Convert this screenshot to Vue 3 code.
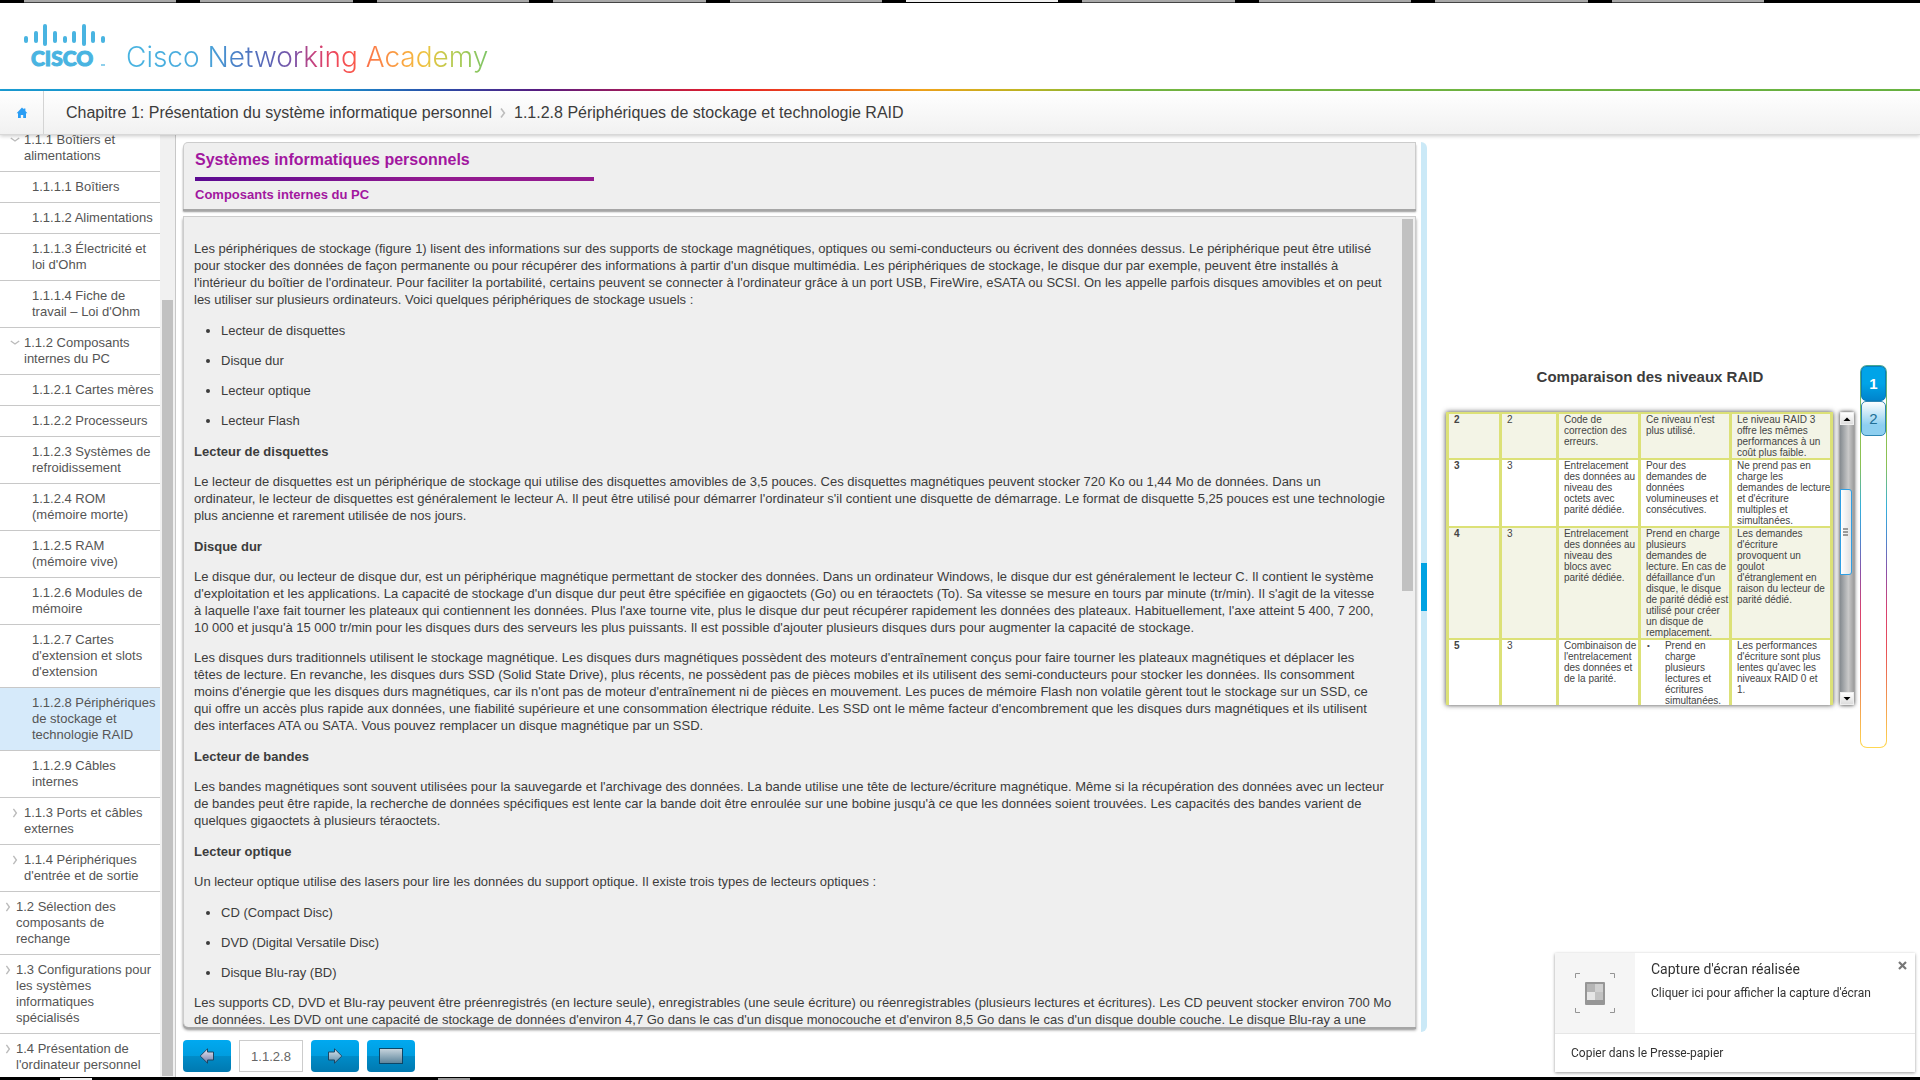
<script setup>
const tabs = [0, 1, 2, 3, 4, 5, 6, 7, 8, 9]
const activeTab = 5

const menu = [
  { level: 2, mark: 'down', text: '1.1.1 Boîtiers et alimentations' },
  { level: 3, text: '1.1.1.1 Boîtiers' },
  { level: 3, text: '1.1.1.2 Alimentations' },
  { level: 3, text: "1.1.1.3 Électricité et loi d'Ohm" },
  { level: 3, text: "1.1.1.4 Fiche de travail – Loi d'Ohm" },
  { level: 2, mark: 'down', text: '1.1.2 Composants internes du PC' },
  { level: 3, text: '1.1.2.1 Cartes mères' },
  { level: 3, text: '1.1.2.2 Processeurs' },
  { level: 3, text: '1.1.2.3 Systèmes de refroidissement' },
  { level: 3, text: '1.1.2.4 ROM (mémoire morte)' },
  { level: 3, text: '1.1.2.5 RAM (mémoire vive)' },
  { level: 3, text: '1.1.2.6 Modules de mémoire' },
  { level: 3, text: "1.1.2.7 Cartes d'extension et slots d'extension" },
  { level: 3, active: true, text: '1.1.2.8 Périphériques de stockage et technologie RAID' },
  { level: 3, text: '1.1.2.9 Câbles internes' },
  { level: 2, mark: 'right', text: '1.1.3 Ports et câbles externes' },
  { level: 2, mark: 'right', text: "1.1.4 Périphériques d'entrée et de sortie" },
  { level: 1, mark: 'right', text: '1.2 Sélection des composants de rechange' },
  { level: 1, mark: 'right', text: '1.3 Configurations pour les systèmes informatiques spécialisés' },
  { level: 1, mark: 'right', text: "1.4 Présentation de l'ordinateur personnel" }
]

const logoBars = [
  [0, 12, 7], [10, 7, 12], [19, 0, 22], [29, 7, 12], [39, 12, 7],
  [48, 7, 12], [58, 0, 22], [67, 7, 12], [77, 12, 7]
]

const raid = [
  ['2', '2', 'Code de\ncorrection des\nerreurs.', "Ce niveau n'est\nplus utilisé.", 'Le niveau RAID 3\noffre les mêmes\nperformances à un\ncoût plus faible.'],
  ['3', '3', 'Entrelacement\ndes données au\nniveau des\noctets avec\nparité dédiée.', 'Pour des\ndemandes de\ndonnées\nvolumineuses et\nconsécutives.', "Ne prend pas en\ncharge les\ndemandes de lecture\net d'écriture\nmultiples et\nsimultanées."],
  ['4', '3', 'Entrelacement\ndes données au\nniveau des\nblocs avec\nparité dédiée.', "Prend en charge\nplusieurs\ndemandes de\nlecture. En cas de\ndéfaillance d'un\ndisque, le disque\nde parité dédié est\nutilisé pour créer\nun disque de\nremplacement.", "Les demandes\nd'écriture\nprovoquent un\ngoulot\nd'étranglement en\nraison du lecteur de\nparité dédié."],
  ['5', '3', "Combinaison de\nl'entrelacement\ndes données et\nde la parité.", ['Prend en\ncharge\nplusieurs\nlectures et\nécritures\nsimultanées.'], "Les performances\nd'écriture sont plus\nlentes qu'avec les\nniveaux RAID 0 et\n1."]
]
</script>

<template>
  <div class="page">
    <div class="tabstrip">
      <i v-for="t in tabs" :key="t" :class="{ on: t === activeTab }"></i>
    </div>

    <header class="brand">
      <svg class="logo" width="84" height="48" viewBox="0 0 84 48" role="img" aria-label="Cisco">
        <rect v-for="b in logoBars" :key="b[0]" :x="b[0]" :y="b[1]" width="4" :height="b[2]" rx="2" fill="#49b4e1" />
        <text x="7" y="42" class="logo-word">CISCO</text>
        <rect x="77" y="40" width="4" height="2" fill="#8fd0ec" />
      </svg>
      <h1>Cisco Networking Academy</h1>
    </header>
    <div class="rainbow"></div>

    <nav class="crumbs" aria-label="Fil d'Ariane">
      <a href="#" class="home" aria-label="Accueil">
        <svg width="12" height="12" viewBox="0 0 12 12"><path d="M6 0.6 7.6 2.2V1.4H9.4V4L11.4 6.2H10V11H7.2V8H4.8V11H2V6.2H0.6Z" fill="#2a9df4" /></svg>
      </a>
      <a href="#" class="crumb">Chapitre 1: Présentation du système informatique personnel</a>
      <svg class="sep" width="6" height="10" viewBox="0 0 6 10"><path d="M1 0.5 4.4 5 1 9.5" fill="none" stroke="#bdbdbd" stroke-width="1.6" /></svg>
      <a href="#" class="crumb">1.1.2.8 Périphériques de stockage et technologie RAID</a>
    </nav>

    <div class="work">
      <aside class="side">
        <ul class="menu">
          <li v-for="m in menu" :key="m.text" :class="['level' + m.level, { active: m.active }]">
            <svg v-if="m.mark === 'down'" class="mark" width="10" height="10" viewBox="0 0 10 10"><path d="M0.8 3 5 6 9.2 3" fill="none" stroke="#bbb" stroke-width="1.4" /></svg>
            <svg v-if="m.mark === 'right'" class="mark" width="10" height="10" viewBox="0 0 10 10"><path d="M3.4 0.8 6.4 5 3.4 9.2" fill="none" stroke="#bbb" stroke-width="1.4" /></svg>
            <a href="#">{{ m.text }}</a>
          </li>
        </ul>
        <div class="side-track"><div class="thumb"></div></div>
      </aside>

      <main class="content">
        <section class="heading">
          <h2>Systèmes informatiques personnels</h2>
          <div class="underline"></div>
          <h3>Composants internes du PC</h3>
        </section>

        <section class="reader">
          <article class="text">
            <p>Les périphériques de stockage (figure 1) lisent des informations sur des supports de stockage magnétiques, optiques ou semi-conducteurs ou écrivent des données dessus. Le périphérique peut être utilisé pour stocker des données de façon permanente ou pour récupérer des informations à partir d'un disque multimédia. Les périphériques de stockage, le disque dur par exemple, peuvent être installés à l'intérieur du boîtier de l'ordinateur. Pour faciliter la portabilité, certains peuvent se connecter à l'ordinateur grâce à un port USB, FireWire, eSATA ou SCSI. On les appelle parfois disques amovibles et on peut les utiliser sur plusieurs ordinateurs. Voici quelques périphériques de stockage usuels :</p>
            <ul>
              <li>Lecteur de disquettes</li>
              <li>Disque dur</li>
              <li>Lecteur optique</li>
              <li>Lecteur Flash</li>
            </ul>
            <h4>Lecteur de disquettes</h4>
            <p>Le lecteur de disquettes est un périphérique de stockage qui utilise des disquettes amovibles de 3,5 pouces. Ces disquettes magnétiques peuvent stocker 720 Ko ou 1,44 Mo de données. Dans un ordinateur, le lecteur de disquettes est généralement le lecteur A. Il peut être utilisé pour démarrer l'ordinateur s'il contient une disquette de démarrage. Le format de disquette 5,25 pouces est une technologie plus ancienne et rarement utilisée de nos jours.</p>
            <h4>Disque dur</h4>
            <p>Le disque dur, ou lecteur de disque dur, est un périphérique magnétique permettant de stocker des données. Dans un ordinateur Windows, le disque dur est généralement le lecteur C. Il contient le système d'exploitation et les applications. La capacité de stockage d'un disque dur peut être spécifiée en gigaoctets (Go) ou en téraoctets (To). Sa vitesse se mesure en tours par minute (tr/min). Il s'agit de la vitesse à laquelle l'axe fait tourner les plateaux qui contiennent les données. Plus l'axe tourne vite, plus le disque dur peut récupérer rapidement les données des plateaux. Habituellement, l'axe atteint 5&nbsp;400, 7&nbsp;200, 10&nbsp;000 et jusqu'à 15&nbsp;000 tr/min pour les disques durs des serveurs les plus puissants. Il est possible d'ajouter plusieurs disques durs pour augmenter la capacité de stockage.</p>
            <p>Les disques durs traditionnels utilisent le stockage magnétique. Les disques durs magnétiques possèdent des moteurs d'entraînement conçus pour faire tourner les plateaux magnétiques et déplacer les têtes de lecture. En revanche, les disques durs SSD (Solid State Drive), plus récents, ne possèdent pas de pièces mobiles et ils utilisent des semi-conducteurs pour stocker les données. Ils consomment moins d'énergie que les disques durs magnétiques, car ils n'ont pas de moteur d'entraînement ni de pièces en mouvement. Les puces de mémoire Flash non volatile gèrent tout le stockage sur un SSD, ce qui offre un accès plus rapide aux données, une fiabilité supérieure et une consommation électrique réduite. Les SSD ont le même facteur d'encombrement que les disques durs magnétiques et ils utilisent des interfaces ATA ou SATA. Vous pouvez remplacer un disque magnétique par un SSD.</p>
            <h4>Lecteur de bandes</h4>
            <p>Les bandes magnétiques sont souvent utilisées pour la sauvegarde et l'archivage des données. La bande utilise une tête de lecture/écriture magnétique. Même si la récupération des données avec un lecteur de bandes peut être rapide, la recherche de données spécifiques est lente car la bande doit être enroulée sur une bobine jusqu'à ce que les données soient trouvées. Les capacités des bandes varient de quelques gigaoctets à plusieurs téraoctets.</p>
            <h4>Lecteur optique</h4>
            <p>Un lecteur optique utilise des lasers pour lire les données du support optique. Il existe trois types de lecteurs optiques :</p>
            <ul>
              <li>CD (Compact Disc)</li>
              <li>DVD (Digital Versatile Disc)</li>
              <li>Disque Blu-ray (BD)</li>
            </ul>
            <p class="wide">Les supports CD, DVD et Blu-ray peuvent être préenregistrés (en lecture seule), enregistrables (une seule écriture) ou réenregistrables (plusieurs lectures et écritures). Les CD peuvent stocker environ 700 Mo de données. Les DVD ont une capacité de stockage de données d'environ 4,7 Go dans le cas d'un disque monocouche et d'environ 8,5 Go dans le cas d'un disque double couche. Le disque Blu-ray a une</p>
          </article>
          <div class="text-track"><div class="thumb"></div></div>
        </section>

        <div class="pagenav">
          <button type="button" aria-label="Page précédente">
            <svg width="16" height="16" viewBox="0 0 16 16"><defs><linearGradient id="ga" x2="0" y2="1"><stop offset="0" stop-color="#eceaf4" /><stop offset="1" stop-color="#6c78a6" /></linearGradient></defs><path d="M8.5 0.8V4H14.5V12H8.5V15.2L1.2 8Z" fill="url(#ga)" stroke="#1d4663" /></svg>
          </button>
          <input type="text" value="1.1.2.8" aria-label="Numéro de page">
          <button type="button" aria-label="Page suivante">
            <svg width="16" height="16" viewBox="0 0 16 16"><defs><linearGradient id="gb" x2="0" y2="1"><stop offset="0" stop-color="#dce8f0" /><stop offset="1" stop-color="#5d8aa6" /></linearGradient></defs><path d="M7.5 0.8V4H1.5V12H7.5V15.2L14.8 8Z" fill="url(#gb)" stroke="#1d4663" /></svg>
          </button>
          <button type="button" aria-label="Plein écran">
            <svg width="24" height="16" viewBox="0 0 24 16"><defs><linearGradient id="gc" x2="0" y2="1"><stop offset="0" stop-color="#c9d6de" /><stop offset="1" stop-color="#5a8299" /></linearGradient></defs><rect x="0.5" y="0.5" width="23" height="15" fill="url(#gc)" stroke="#0c4667" /></svg>
          </button>
        </div>
      </main>

      <div class="splitter"><div class="grip"></div></div>

      <section class="media">
        <figure>
          <figcaption>Comparaison des niveaux RAID</figcaption>
          <div class="grid-row">
            <div class="raid-box">
              <table>
                <colgroup><col class="c1"><col class="c2"><col class="c3"><col class="c4"><col class="c5"></colgroup>
                <tbody>
                  <tr v-for="r in raid" :key="r[0]">
                    <th scope="row">{{ r[0] }}</th>
                    <td v-for="(c, i) in r.slice(1)" :key="i">
                      <ul v-if="Array.isArray(c)"><li>{{ c[0] }}</li></ul>
                      <template v-else>{{ c }}</template>
                    </td>
                  </tr>
                </tbody>
              </table>
            </div>
            <div class="raid-scroll">
              <button type="button" aria-label="Monter"><svg width="8" height="4" viewBox="0 0 8 4"><path d="M0.5 4 4 0.5 7.5 4Z" /></svg></button>
              <div class="raid-thumb"><i></i><i></i><i></i></div>
              <button type="button" aria-label="Descendre"><svg width="8" height="4" viewBox="0 0 8 4"><path d="M0.5 0 4 3.5 7.5 0Z" /></svg></button>
            </div>
          </div>
        </figure>
        <div class="pager">
          <button type="button" class="current">1</button>
          <button type="button">2</button>
        </div>
      </section>
    </div>

    <div class="taskbar"><i class="bright"></i><i></i></div>

    <div class="toast" role="status">
      <div class="toast-main">
        <div class="shot">
          <svg width="40" height="40" viewBox="0 0 40 40">
            <path d="M0.5 5V0.5H5M35 0.5H39.5V5M0.5 35V39.5H5M35 39.5H39.5V35" fill="none" stroke="#949494" />
            <rect x="10" y="9" width="20" height="23" rx="1" fill="#969696" />
            <path d="M12 11h8v8h-8z" fill="#b5b5b5" /><path d="M20 11h8v8h-8z" fill="#d0d0d0" />
            <path d="M12 19h8v8h-8z" fill="#e6e6e6" /><path d="M20 19h8v8h-8z" fill="#c2c2c2" />
          </svg>
        </div>
        <div class="toast-text">
          <strong>Capture d'écran réalisée</strong>
          <span>Cliquer ici pour afficher la capture d'écran</span>
        </div>
        <button type="button" class="close" aria-label="Fermer"><svg width="9" height="9" viewBox="0 0 9 9"><path d="M1 1 8 8M8 1 1 8" stroke="#777" stroke-width="2.2" /></svg></button>
      </div>
      <button type="button" class="toast-action">Copier dans le Presse-papier</button>
    </div>
  </div>
</template>

<style>
body { margin: 0; background: #fff; }
</style>

<style scoped>
* { box-sizing: border-box; }
h1, h2, h3, h4, p, ul, figure { margin: 0; padding: 0; }
button { font: inherit; padding: 0; border: 0; display: flex; align-items: center; justify-content: center; }
a { color: inherit; text-decoration: none; }
.page {
  height: 100vh;
  display: flex;
  flex-direction: column;
  overflow: hidden;
  background: #fff;
  font-family: "Liberation Sans", Arial, sans-serif;
  font-size: 13px;
  color: #3c3c3c;
}
.tabstrip {
  flex: none;
  height: 3px;
  background: #000;
  display: flex;
  gap: 24px;
  padding: 0 156px 0 24px;
}
.tabstrip i { flex: 1; background: #a8a8a8; border-bottom: 1px solid #444; }
.tabstrip i.on { background: #f0f0f0; border-bottom-color: #000; }

.brand {
  flex: none;
  height: 86px;
  display: flex;
  align-items: flex-start;
  gap: 18px;
  padding: 21px 24px 0;
}
.logo { overflow: visible; }
.logo-word { font-family: Lato, sans-serif; font-weight: 900; font-size: 21px; fill: #49b4e1; stroke: #49b4e1; stroke-width: 1px; }
h1 {
  margin-top: 15px;
  font-family: Inter, sans-serif;
  font-weight: 300;
  font-size: 28px;
  line-height: 36px;
  color: transparent;
  background: linear-gradient(90deg, #49b4e1 0, #49a8dc 22%, #4a82c8 30%, #5a62b4 40%, #8250a4 47%, #c8407c 52%, #f04858 58%, #fb5a48 64%, #fb7c48 68%, #f9ad40 78%, #ecc440 83%, #b0cc54 91%, #7cc466 100%);
  background-clip: text;
  -webkit-background-clip: text;
}
.rainbow {
  flex: none;
  height: 2px;
  background: linear-gradient(90deg, #1ba0d8 0, #1b9ad8 17%, #2d4fae 23%, #5a1d86 28%, #a81c60 33%, #f02028 38%, #f65a1c 43%, #f8a81c 48%, #c8bc24 53%, #78bc44 59%, #6cb944 100%);
}
.crumbs {
  flex: none;
  height: 44px;
  display: flex;
  align-items: center;
  background: linear-gradient(#fff, #f1f1f1);
  border-bottom: 1px solid #d8d8d8;
  box-shadow: 0 1px 4px rgba(0, 0, 0, .22);
  position: relative;
  z-index: 1;
  font-size: 16px;
}
.home {
  align-self: stretch;
  width: 44px;
  margin-right: 22px;
  border-right: 1px solid #d4d4d4;
  display: flex;
  align-items: center;
  justify-content: center;
}
.sep { margin: 0 8px; }

.work {
  flex: 1;
  min-height: 0;
  display: grid;
  grid-template-columns: 183px minmax(0, 5fr) 11px minmax(0, 2fr);
  grid-template-rows: minmax(0, 1fr);
}
.side {
  margin-right: 7px;
  display: flex;
  overflow: hidden;
  border-right: 1px solid #c8c8c8;
}
.menu { flex: 1; margin-top: -10px; list-style: none; line-height: 16px; color: #555; }
.menu li { position: relative; padding: 7px 2px 7px 32px; border-bottom: 1px solid #c8c8c8; }
.menu .level2 { padding-left: 24px; }
.menu .level1 { padding-left: 16px; }
.menu .active { background: #d6eafa; }
.mark { position: absolute; top: 10px; left: 10px; }
.level1 .mark { left: 3px; }
.side-track { flex: none; width: 15px; background: #f1f1f1; padding: 165px 2px 1px; }
.thumb { background: #c1c1c1; height: 100%; }

.content { display: flex; flex-direction: column; padding-top: 7px; }
.heading, .reader { background: #efefef; border: 1px solid #ccc; border-bottom: 0; }
.heading {
  flex: none;
  border-radius: 5px 0 0 0;
  padding: 8px 11px 8px;
  box-shadow: 0 2px 0 #a6a6a6, 0 3px 2px #999;
  color: #a2179f;
}
h2 { font-size: 16px; line-height: 18px; }
.underline { width: 33%; height: 4px; margin: 8px 0; background: linear-gradient(90deg, #5b0a91, #931a8f 60%); }
h3 { font-size: 13px; line-height: 12px; }
.reader {
  flex: 1;
  min-height: 0;
  margin-top: 7px;
  display: flex;
  overflow: hidden;
  border-radius: 0 0 0 5px;
  box-shadow: 0 2px 0 #a6a6a6, 0 3px 3px #888;
}
.text { flex: 1; padding: 23px 17px 0 10px; line-height: 17px; }
.text p, .text li { margin-bottom: 13px; }
.text .wide { margin-right: -10px; }
.text h4 { margin: 14px 0 13px; font-size: 13px; }
.text ul { margin-top: 14px; padding-left: 27px; }
.text-track { flex: none; width: 12px; padding-top: 2px; margin-right: 1px; }
.text-track .thumb { width: 11px; height: 46%; }
.pagenav { flex: none; display: flex; gap: 8px; padding: 13px 0 5px; }
.pagenav button {
  width: 48px;
  height: 32px;
  border-radius: 4px;
  background: linear-gradient(#00a9f0, #009ddf 50%, #008cc8 50%, #0079b0);
}
.pagenav input {
  width: 64px;
  height: 32px;
  padding: 0;
  border: 1px solid #ccc;
  background: #fff;
  font: inherit;
  color: #666;
  text-align: center;
}

.splitter {
  margin: 7px 0 45px 5px;
  border-radius: 0 6px 6px 0;
  background: #cbe9f7;
  display: flex;
  align-items: center;
}
.grip { width: 6px; height: 48px; background: #00a2e2; }

.media {
  display: flex;
  align-items: center;
  justify-content: center;
  gap: 6px;
  padding: 0 33px 99px 19px;
}
figure { height: 383px; }
figcaption { text-align: center; font-size: 15px; line-height: 24px; font-weight: bold; margin-bottom: 23px; }
.grid-row { display: flex; gap: 7px; }
.raid-box { width: 387px; height: 293px; overflow: hidden; background: #dce177; box-shadow: 0 0 5px #444; }
table { table-layout: fixed; width: 387px; border-spacing: 3px 2px; font-size: 10px; line-height: 11px; color: #444; }
.c1 { width: 50px; }
.c2 { width: 54px; }
.c3 { width: 79px; }
.c4 { width: 88px; }
.c5 { width: 98px; }
th, td { padding: 0 0 0 5px; background: #fff; vertical-align: top; text-align: left; white-space: pre; }
tr:nth-child(odd) > * { background: #f3f4e6; }
td ul { padding-left: 19px; list-style: none; }
td li::before { content: "•"; position: absolute; margin-left: -18px; font-size: 8px; }
.raid-scroll {
  width: 14px;
  height: 293px;
  display: flex;
  flex-direction: column;
  justify-content: space-between;
  background: linear-gradient(90deg, #858b90, #c9c9c9 60%, #9c9c9c);
  box-shadow: 0 0 4px #222;
}
.raid-scroll button { height: 13px; background: linear-gradient(#fff, #ddd); border: 1px solid #eee; }
.raid-thumb {
  width: 12px;
  height: 86px;
  margin-bottom: 54px;
  border: 1px solid #2f9fe4;
  border-radius: 0 3px 3px 0;
  background: linear-gradient(90deg, #fff, #e2e2e2);
  display: flex;
  flex-direction: column;
  align-items: center;
  justify-content: center;
  gap: 1px;
}
.raid-thumb i { width: 5px; height: 2px; background: #9a9a9a; }
.pager {
  width: 27px;
  height: 383px;
  border: 1px solid transparent;
  border-radius: 7px;
  background:
    linear-gradient(#fff, #fff) padding-box,
    linear-gradient(#4aa890, #8cc152 14%, #8cc152 26%, #35b0dc 37%, #4a8cd0 45%, #8c50a8 54%, #d84070 64%, #e85058 74%, #f09050 86%, #ffd850) border-box;
}
.pager button {
  width: 25px;
  height: 35px;
  border-radius: 5px;
  border: 1px solid #2e86b4;
  background: linear-gradient(#fff, #8ecff0 70%);
  color: #216f96;
  font-size: 15px;
}
.pager .current { border-color: #0a7cba; background: linear-gradient(#00a4e8 50%, #0084cc); color: #fff; font-weight: bold; }

.taskbar { flex: none; height: 3px; padding: 1px 0 0 60px; background: #000; display: flex; gap: 346px; }
.taskbar i { width: 32px; background: #999; }
.taskbar .bright { background: #f0f0f0; }

.toast {
  position: fixed;
  right: 5px;
  bottom: 8px;
  z-index: 2;
  width: 360px;
  background: #fff;
  box-shadow: 0 1px 3px rgba(0, 0, 0, .4);
  font-family: Roboto, sans-serif;
  font-size: 12px;
  color: #333;
}
.toast-main { display: flex; height: 81px; border-bottom: 1px solid #e6e6e6; }
.shot { width: 80px; background: #f5f5f5; display: flex; align-items: center; justify-content: center; }
.toast-text { flex: 1; display: flex; flex-direction: column; gap: 8px; padding: 8px 0 0 16px; line-height: 16px; }
.toast-text strong { font-size: 14px; font-weight: 400; }
.close { width: 9px; height: 9px; margin: 8px 8px 0 0; background: none; }
.toast-action { width: 100%; height: 38px; padding-left: 16px; background: none; justify-content: flex-start; color: inherit; }
</style>
